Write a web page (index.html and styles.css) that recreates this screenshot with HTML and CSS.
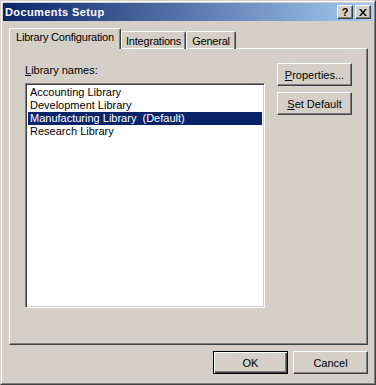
FILE: index.html
```html
<!DOCTYPE html>
<html lang="en">
<head>
    <meta charset="UTF-8">
    <title>Documents Setup</title>
    <link rel="stylesheet" href="styles.css">
</head>
<body>
    <div class="window">
        <div class="window-inner">
            <div class="titlebar">
                <span class="title">Documents Setup</span>
                <div class="caption-buttons">
                    <span class="cap-btn help">?</span>
                    <span class="cap-btn close">
                        <svg width="8" height="7" viewBox="0 0 8 7">
                            <path d="M0 0h2l2 2.5L6 0h2L5 3.5 8 7H6L4 4.5 2 7H0l3-3.5z" fill="#000"/>
                        </svg>
                    </span>
                </div>
            </div>

            <div class="dialog-body">
                <div class="tabs">
                    <div class="tab active">Library Configuration</div>
                    <div class="tab">Integrations</div>
                    <div class="tab">General</div>
                </div>

                <div class="panel">
                    <div class="left-col">
                        <div class="label"><u>L</u>ibrary names:</div>
                        <div class="listbox">
                            <div class="item">Accounting Library</div>
                            <div class="item">Development Library</div>
                            <div class="item selected">Manufacturing Library &nbsp;(Default)</div>
                            <div class="item">Research Library</div>
                        </div>
                    </div>
                    <div class="right-col">
                        <div class="button"><u>P</u>roperties...</div>
                        <div class="button"><u>S</u>et Default</div>
                    </div>
                </div>

                <div class="footer">
                    <div class="button default">OK</div>
                    <div class="button">Cancel</div>
                </div>
            </div>
        </div>
    </div>
</body>
</html>
```

FILE: styles.css
```css
* {
    box-sizing: border-box;
}
body {
    margin: 0;
    width: 376px;
    height: 385px;
    background: #d4d0c8;
    font-family: "Liberation Sans", Arial, sans-serif;
    font-size: 11px;
    color: #000;
}
.window {
    width: 376px;
    height: 385px;
    border: 1px solid;
    border-color: #d4d0c8 #404040 #404040 #d4d0c8;
}
.window-inner {
    height: 100%;
    border: 1px solid;
    border-color: #fff #808080 #808080 #fff;
    padding: 1px;
}
.titlebar {
    height: 18px;
    background: linear-gradient(to right, #0a246a, #a6caf0);
    display: flex;
    align-items: center;
    justify-content: space-between;
    padding: 0 2px 0 2px;
}
.title {
    color: #fff;
    font-weight: bold;
    font-size: 11px;
    letter-spacing: 0.4px;
}
.caption-buttons {
    display: flex;
    gap: 2px;
}
.cap-btn {
    width: 16px;
    height: 14px;
    background: #d4d0c8;
    border: 1px solid;
    border-color: #fff #404040 #404040 #fff;
    box-shadow: inset -1px -1px #808080;
    display: flex;
    align-items: center;
    justify-content: center;
    font-weight: bold;
    font-size: 11px;
    line-height: 1;
}
.close svg {
    display: block;
    margin-left: -1px;
}
.dialog-body {
    padding: 8px 5px 0 6px;
}
.tabs {
    display: flex;
    align-items: flex-end;
    height: 20px;
    margin-bottom: -1px;
}
.tab {
    height: 18px;
    padding: 2px 0 0 0;
    border: 1px solid;
    border-bottom: none;
    border-color: #fff #404040 #fff #fff;
    box-shadow: inset -1px 0 #808080;
    border-radius: 2px 2px 0 0;
    line-height: 14px;
    white-space: nowrap;
    text-align: center;
    letter-spacing: -0.2px;
}
.tab:nth-child(2) {
    width: 65px;
}
.tab:nth-child(3) {
    width: 50px;
}
.tab.active {
    width: 112px;
    height: 21px;
    padding: 1px 0 0 0;
    background: #d4d0c8;
    position: relative;
    z-index: 1;
}
.panel {
    height: 297px;
    border: 1px solid;
    border-color: #fff #404040 #404040 #fff;
    box-shadow: inset -1px -1px #808080;
    display: flex;
    padding: 14px 0 0 15px;
    gap: 12px;
}
.left-col {
    width: 240px;
}
.label {
    line-height: 13px;
    margin: 1px 0 6px 0;
}
.listbox {
    height: 225px;
    background: #fff;
    border: 1px solid;
    border-color: #808080 #fff #fff #808080;
    box-shadow: inset 1px 1px #404040, inset -1px -1px #d4d0c8;
    padding: 2px 2px;
}
.item {
    height: 13px;
    line-height: 13px;
    padding-left: 2px;
    white-space: pre;
}
.item.selected {
    background: #0a246a;
    color: #fff;
}
.right-col {
    display: flex;
    flex-direction: column;
    gap: 6px;
}
.button {
    width: 75px;
    height: 23px;
    border: 1px solid;
    border-color: #fff #404040 #404040 #fff;
    box-shadow: inset -1px -1px #808080;
    display: flex;
    align-items: center;
    justify-content: center;
    background: #d4d0c8;
}
.button.default {
    border: 1px solid #000;
    box-shadow: inset 1px 1px #fff, inset -1px -1px #404040, inset -2px -2px #808080;
}
.footer {
    display: flex;
    justify-content: flex-end;
    gap: 5px;
    margin-top: 6px;
}
```
